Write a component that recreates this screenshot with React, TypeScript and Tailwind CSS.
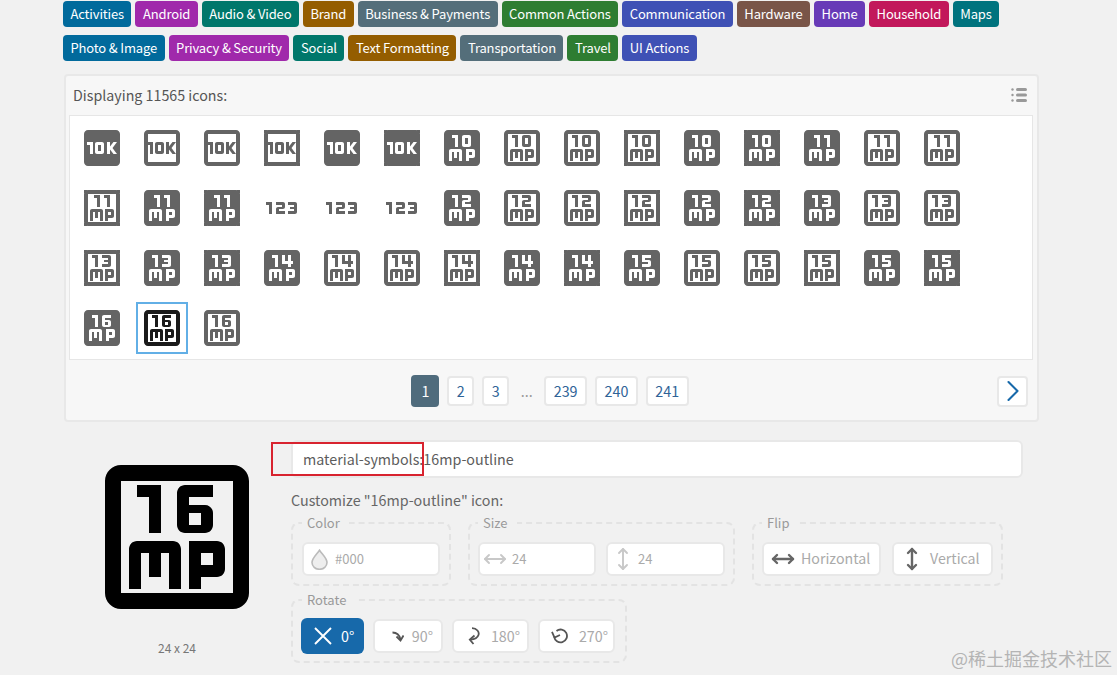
import React from 'react';
import { ChevronRight, MoveHorizontal, MoveVertical } from 'lucide-react';
import {
    Md10K, Md10Mp, Md11Mp, Md123, Md12Mp, Md13Mp, Md14Mp, Md15Mp, Md16Mp,
    MdOutline10K, MdOutline10Mp, MdOutline11Mp, MdOutline123, MdOutline12Mp, MdOutline13Mp, MdOutline14Mp, MdOutline15Mp, MdOutline16Mp,
} from 'react-icons/md';
import type { IconType } from 'react-icons';

const badges = [
    { label: 'Activities', color: 'bg-[#016a9c]' },
    { label: 'Android', color: 'bg-[#a029ab]' },
    { label: 'Audio & Video', color: 'bg-[#00776b]' },
    { label: 'Brand', color: 'bg-[#945d00]' },
    { label: 'Business & Payments', color: 'bg-[#546e7a]' },
    { label: 'Common Actions', color: 'bg-[#2e7d32]' },
    { label: 'Communication', color: 'bg-[#3f51b5]' },
    { label: 'Hardware', color: 'bg-[#795548]' },
    { label: 'Home', color: 'bg-[#673ab7]' },
    { label: 'Household', color: 'bg-[#c2185b]' },
    { label: 'Maps', color: 'bg-[#00737e]' },
    { label: 'Photo & Image', color: 'bg-[#016a9c]' },
    { label: 'Privacy & Security', color: 'bg-[#a029ab]' },
    { label: 'Social', color: 'bg-[#00776b]' },
    { label: 'Text Formatting', color: 'bg-[#945d00]' },
    { label: 'Transportation', color: 'bg-[#546e7a]' },
    { label: 'Travel', color: 'bg-[#2e7d32]' },
    { label: 'UI Actions', color: 'bg-[#3f51b5]' },
];

type GridIcon = { Icon: IconType; sharp?: boolean };

// filled, outline, outline-rounded, outline-sharp, rounded, sharp
const family = (Filled: IconType, Outline: IconType): GridIcon[] => [
    { Icon: Filled },
    { Icon: Outline },
    { Icon: Outline },
    { Icon: Outline, sharp: true },
    { Icon: Filled },
    { Icon: Filled, sharp: true },
];

const gridIcons: GridIcon[] = [
    ...family(Md10K, MdOutline10K),
    ...family(Md10Mp, MdOutline10Mp),
    ...family(Md11Mp, MdOutline11Mp),
    { Icon: Md123 },
    { Icon: MdOutline123 },
    { Icon: Md123 },
    ...family(Md12Mp, MdOutline12Mp),
    ...family(Md13Mp, MdOutline13Mp),
    ...family(Md14Mp, MdOutline14Mp),
    ...family(Md15Mp, MdOutline15Mp),
    ...family(Md16Mp, MdOutline16Mp).slice(0, 3),
];

const SELECTED = 46;

const SquareIcon = ({ Icon, sharp }: GridIcon) => (
    <svg viewBox="0 0 24 24" className="w-full h-full" fill="currentColor">
        {sharp && (
            <>
                <rect x="3" y="3" width="1.5" height="1.5" />
                <rect x="19.5" y="3" width="1.5" height="1.5" />
                <rect x="3" y="19.5" width="1.5" height="1.5" />
                <rect x="19.5" y="19.5" width="1.5" height="1.5" />
            </>
        )}
        <Icon size={24} />
    </svg>
);

const PageButton = ({ children }: { children: React.ReactNode }) => (
    <span className="h-[30px] flex items-center px-[7.5px] bg-white border-2 border-[#e8e8e8] rounded text-[#2f6397]">{children}</span>
);

const Field = ({ title, className, children }: { title: string; className: string; children: React.ReactNode }) => (
    <fieldset className={`border-2 border-dashed border-[#e3e3e3] rounded-lg ${className}`}>
        <legend className="pl-[5px] pr-[9px] text-[13px] leading-5 text-[#9a9a9a]">{title}</legend>
        {children}
    </fieldset>
);

const Control = ({ className, children }: { className: string; children: React.ReactNode }) => (
    <div className={`h-[34px] flex items-center bg-white border-2 border-[#e8e8e8] rounded-md text-[#aaa] ${className}`}>{children}</div>
);

const Drop = () => (
    <svg viewBox="0 0 17 21" className="w-[17px] h-[21px]" fill="#eee" stroke="#bbb" strokeWidth="1.6">
        <path d="M8.5 1.2 C6 5 1 9 1 13.5 a7.5 6.8 0 0 0 15 0 C16 9 11 5 8.5 1.2 Z" />
    </svg>
);

const Cross = () => (
    <svg viewBox="0 0 18 18" className="w-[18px] h-[18px]" fill="none" stroke="currentColor" strokeWidth="1.9">
        <path d="M1 1 L17 17 M17 1 L1 17" />
    </svg>
);

const Rotate90 = () => (
    <svg viewBox="0 0 12 11" className="w-3 h-[11px]" fill="none" stroke="#555" strokeWidth="1.8">
        <path d="M0.5 1.5 C5 1.5 7.5 4 8.5 8.5" />
        <path d="M4.5 5.5 L8.5 9.5 L11.5 4.5" />
    </svg>
);

const Rotate180 = () => (
    <svg viewBox="0 0 12 18" className="w-3 h-[18px]" fill="none" stroke="#555" strokeWidth="1.8">
        <path d="M4 1.2 C9 1.2 11.5 5 10.5 8 C9.5 11 6 12.3 2.5 12.5" />
        <path d="M6.5 8.5 L1.8 12.5 L5.5 17" />
    </svg>
);

const Rotate270 = () => (
    <svg viewBox="0 0 17 16" className="w-[17px] h-4" fill="none" stroke="#555" strokeWidth="1.8">
        <path d="M5.5 3 A6.4 6.4 0 1 1 3.2 8.5" />
        <path d="M1 3.8 L3.5 9.5 L9 7" />
    </svg>
);

const ListIcon = () => (
    <svg viewBox="0 0 16 16" className="w-4 h-4" fill="#999">
        <circle cx="1.5" cy="2.5" r="1.2" />
        <circle cx="1.5" cy="8" r="1.2" />
        <circle cx="1.5" cy="13.5" r="1.2" />
        <rect x="5" y="1" width="11" height="3" rx="1.5" />
        <rect x="5" y="6.5" width="11" height="3" rx="1.5" />
        <rect x="5" y="12" width="11" height="3" rx="1.5" />
    </svg>
);

const App = () => {
    return (
        <div className="relative w-[1117px] h-[675px] overflow-hidden bg-[#f1f1f1] pl-[63px] pt-px font-['Noto_Sans_CJK_SC',sans-serif] text-[#555]">
            <div className="flex flex-wrap gap-x-1 gap-y-2 w-[975px]">
                {badges.map(b => (
                    <span key={b.label} className={`h-[26px] px-[7.5px] flex items-center rounded text-[13px] tracking-[-0.15px] text-white ${b.color}`}>{b.label}</span>
                ))}
            </div>

            <div className="mt-[13px] ml-px w-[975px] h-[348px] bg-[#f7f7f7] border-2 border-[#e8e8e8] rounded">
                <div className="h-[39px] pb-[2px] pl-[7px] pr-[10px] flex items-center justify-between text-[14.25px]">
                    <span>Displaying 11565 icons:</span>
                    <ListIcon />
                </div>
                <div className="ml-[3px] mr-[4px] bg-white border border-[#e6e6e6] flex flex-wrap content-start gap-3 p-2 h-[245px] text-[#646464]">
                    {gridIcons.map((g, i) => (
                        <div key={i} className={`w-12 h-12 ${i === SELECTED ? 'outline-2 outline-[#62afe6] text-[#1a1a1a]' : ''}`}>
                            <SquareIcon {...g} />
                        </div>
                    ))}
                </div>
                <div className="grid grid-cols-[1fr_auto_1fr] items-center h-[60px] pt-[2px] text-[14.3px]">
                    <div />
                    <div className="flex items-center gap-2 mr-[3px]">
                        <span className="h-8 w-[28px] flex items-center justify-center rounded bg-[#4f6b7c] text-white">1</span>
                        <PageButton>2</PageButton>
                        <PageButton>3</PageButton>
                        <span className="w-[19px] text-center text-[#999]">...</span>
                        <PageButton>239</PageButton>
                        <PageButton>240</PageButton>
                        <PageButton>241</PageButton>
                    </div>
                    <span className="justify-self-end mr-[9px] w-[31px] h-[31px] flex items-center justify-center bg-white border-2 border-[#e8e8e8] rounded text-[#1769aa]">
                        <ChevronRight size={36} strokeWidth={1.4} className="shrink-0" />
                    </span>
                </div>
            </div>

            <div className="flex">
                <div className="w-[228px] shrink-0 pt-[19px] flex flex-col items-center">
                    <div className="w-48 h-48 text-black">
                        <SquareIcon Icon={MdOutline16Mp} />
                    </div>
                    <span className="mt-[6px] text-xs leading-[18px] text-[#777]">24 x 24</span>
                </div>

                <div className="relative flex-1 pt-[18px]">
                    <div className="w-[732px] h-[38px] flex items-center pl-[10px] bg-white border-2 border-[#e8e8e8] rounded-md text-[14.3px] text-[#5c5c5c]">material-symbols:16mp-outline</div>
                    <div className="absolute -left-5 top-5 w-[153px] h-[34px] border-2 border-[#d8232f]" />

                    <p className="mt-[10px] text-[14.3px] leading-6 text-[#666]">Customize "16mp-outline" icon:</p>

                    <div className="flex items-start mt-px">
                        <Field title="Color" className="w-[160px] px-[9px] pt-[9px] pb-2">
                            <Control className="pl-[7px] gap-[7px] text-[13px]"><Drop />#000</Control>
                        </Field>
                        <Field title="Size" className="w-[267px] ml-[17px] px-2 pt-[9px] pb-2">
                            <div className="flex gap-[10px]">
                                <Control className="w-[118px] pl-[3px] gap-[5px] text-[13px]"><MoveHorizontal size={24} strokeWidth={1.9} color="#c8c8c8" />24</Control>
                                <Control className="flex-1 pl-[3px] gap-[3px] text-[13px]"><MoveVertical size={24} strokeWidth={1.9} color="#c8c8c8" />24</Control>
                            </div>
                        </Field>
                        <Field title="Flip" className="w-[251px] ml-[17px] px-2 pt-[9px] pb-2">
                            <div className="flex gap-[11px]">
                                <Control className="w-[119px] pl-[7px] gap-[6px] text-[14.2px] text-[#8a8a8a]"><MoveHorizontal size={24} strokeWidth={2.4} color="#666" />Horizontal</Control>
                                <Control className="flex-1 pl-[6px] gap-[6px] text-[14.2px] text-[#8a8a8a]"><MoveVertical size={24} strokeWidth={2.4} color="#666" />Vertical</Control>
                            </div>
                        </Field>
                    </div>

                    <Field title="Rotate" className="w-[336px] mt-1 px-[9px] pt-2 pb-[7px]">
                        <div className="flex items-center gap-[9px] -ml-px">
                            <span className="w-[63px] h-9 flex items-center pl-[13px] gap-[9px] rounded-md bg-[#1769aa] text-white text-[14.3px]"><Cross />0°</span>
                            <Control className="w-[70px] justify-end pr-2 gap-2 text-[14.3px]"><Rotate90 />90°</Control>
                            <Control className="w-[77px] justify-end pr-[7px] gap-[11px] text-[14.3px]"><Rotate180 />180°</Control>
                            <Control className="w-[77px] justify-end pr-[5px] gap-[11px] text-[14.3px]"><Rotate270 />270°</Control>
                        </div>
                    </Field>
                </div>
            </div>

            <span className="absolute right-[5px] bottom-[5px] text-[18px] leading-6 text-[#b4b4b4]">@稀土掘金技术社区</span>
        </div>
    );
};

export default App;
